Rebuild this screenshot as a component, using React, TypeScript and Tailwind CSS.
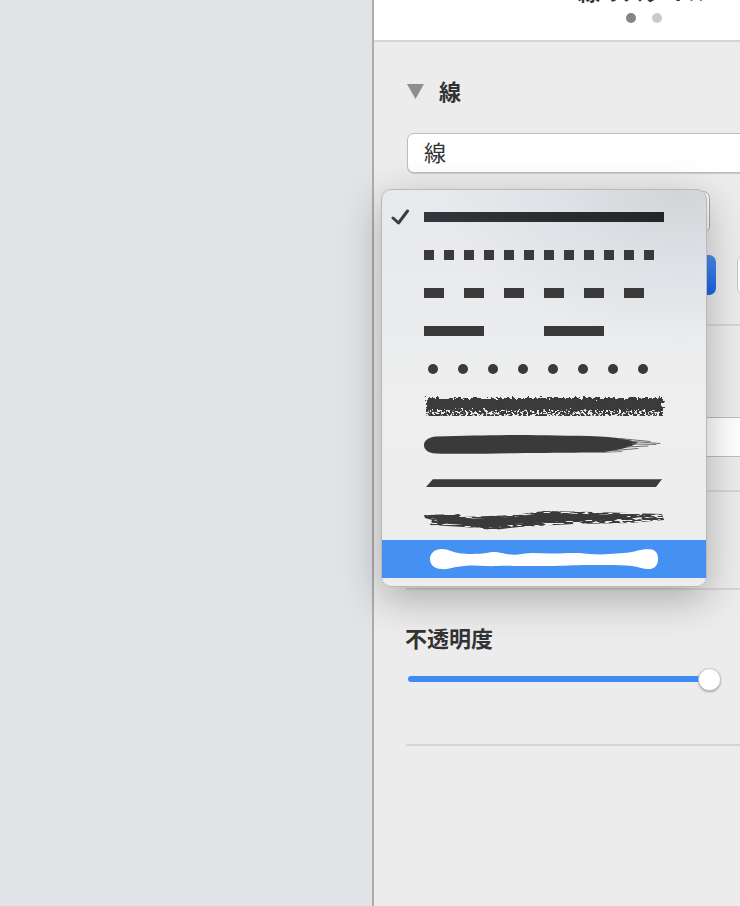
import type { ReactNode } from 'react';

const INK = '#3a3a3a';

function Line({ children }: { children: ReactNode }) {
  return (
    <svg width="250" height="38" viewBox="0 0 250 38" className="overflow-visible">
      {children}
    </svg>
  );
}

function Dashes({ width, step, count }: { width: number; step: number; count: number }) {
  return (
    <Line>
      {Array.from({ length: count }).map((_, i) => (
        <rect key={i} x={i * step} y="14" width={width} height="10" fill={INK} />
      ))}
    </Line>
  );
}

const strokes: ReactNode[] = [
  <Line key="solid">
    <defs>
      <linearGradient id="solid-ink" x1="0" x2="1" y1="0" y2="0">
        <stop offset="0" stopColor="#33363a" />
        <stop offset="1" stopColor="#232528" />
      </linearGradient>
    </defs>
    <rect x="0" y="14" width="240" height="10" fill="url(#solid-ink)" />
  </Line>,
  <Dashes key="dash-s" width={10} step={20} count={12} />,
  <Dashes key="dash-m" width={20} step={40} count={6} />,
  <Dashes key="dash-l" width={60} step={120} count={2} />,
  <Line key="dots">
    {Array.from({ length: 8 }).map((_, i) => (
      <circle key={i} cx={9 + i * 30} cy="19" r="5" fill={INK} />
    ))}
  </Line>,
  <Line key="crayon">
    <g filter="url(#rough)">
      <rect x="3" y="10" width="236" height="12" fill={INK} />
    </g>
    <g filter="url(#speckle)">
      <rect x="2" y="19" width="237" height="9" fill={INK} />
    </g>
  </Line>,
  <Line key="brush">
    <path
      d="M12 10.5 C40 9.5 60 9.5 85 9 C110 9 135 9.5 165 10 C180 10.5 190 11.5 198 12.5 C204 14 210 15 214 16.5 C212 18 210 19 206 20.5 C200 22.5 192 24.5 178 26.5 C150 26.5 130 27 100 27 C60 28 30 28 12 27.5 C3 27 0 23 0 19 C0 14.5 5 11 12 10.5 Z"
      fill={INK}
    />
    <g fill="none" stroke="#6e6e6e" strokeWidth="1" strokeLinecap="round">
      <path d="M195 12.5 L226 15.5" />
      <path d="M208 15.5 L236 17.5" />
      <path d="M208 18 L232 18.5" />
      <path d="M203 21 L224 20" />
      <path d="M190 24.5 L214 22.5" />
      <path d="M178 26.5 L198 25.5" stroke="#8a8a8a" />
    </g>
  </Line>,
  <Line key="chisel">
    <polygon points="9,15 238,15 232,23 2,23" fill={INK} />
    <rect x="9" y="15" width="229" height="1" fill="#666666" />
  </Line>,
  <Line key="dry">
    <g filter="url(#streak)">
      <path
        d="M0 13 L35 12 L38 15 L90 13 L120 9 L170 10 L238 12 L240 18 L205 21 L150 22 L95 25 L70 28 L40 25 L6 23 L8 18 L1 16 Z"
        fill={INK}
      />
    </g>
    <path
      d="M3 13 L34 13 L38 17 L88 15 L118 11 L160 12 L205 13 L200 17 L160 18 L130 20 L92 22 L70 26 L40 23 L14 21 L12 17 Z"
      fill={INK}
    />
  </Line>,
  <Line key="marker">
    <path
      d="M18 9 C24 9 28 12 34 13 C45 14.5 55 14 62 13 C68 11.5 72 11.5 78 13 C85 15 92 15 98 14 C105 12.5 115 13 125 13.5 C135 14 145 12.5 155 13 C165 14 175 15 185 14 C195 13.5 205 13 212 11 C218 9 224 9 228 9.5 C232 10.5 234 14 234 19 C234 25 231 28.5 226 29 C220 29.5 214 27 208 26 C195 24.5 180 25 165 25 C150 25 140 26 125 26 C112 26 100 26 90 26 C75 25.5 70 26.5 62 26 C50 25 40 25.5 32 27 C26 28.5 22 29.5 17 29 C10 28.5 6 24.5 6 19 C6 13 11 9 18 9 Z"
      fill="#ffffff"
    />
  </Line>,
];

function Divider() {
  return <div className="-ml-px h-[2px] bg-[#d6d6d6]" />;
}

function StrokeMenu() {
  return (
    <div className="absolute left-[381px] top-[189px] h-[398px] w-[326px] rounded-[10px] border border-[#b9b9b9] bg-[radial-gradient(ellipse_240px_150px_at_92%_0%,#d2d4d8_0%,#dee1e5_50%,rgba(232,234,237,0)_100%),linear-gradient(#e7e9ed_0%,#e9ebee_30%,#eeeeee_50%,#ededed_100%)] py-[8px] shadow-[0_12px_40px_rgba(0,0,0,0.28)]">
      {strokes.map((stroke, i) => (
        <div key={i} className={`relative flex h-[38px] items-center pl-[42px] ${i === 9 ? 'bg-[#4491f3]' : ''}`}>
          {i === 0 && (
            <svg width="20" height="18" viewBox="0 0 20 18" className="absolute left-[9px] top-[10px]">
              <path d="M2 10 L7.5 15 L16.5 3" fill="none" stroke="#3a3d40" strokeWidth="3" strokeLinecap="round" strokeLinejoin="round" />
            </svg>
          )}
          {stroke}
        </div>
      ))}
    </div>
  );
}

export default function App() {
  return (
    <div className="relative flex h-[906px] w-[740px] overflow-hidden bg-[#e1e3e7] font-['Noto_Sans_CJK_JP','Liberation_Sans',sans-serif] text-[#333333]">
      <svg width="0" height="0" className="absolute">
        <defs>
          <filter id="rough" x="-5%" y="-50%" width="110%" height="200%">
            <feTurbulence type="fractalNoise" baseFrequency="0.32" numOctaves="2" seed="3" />
            <feDisplacementMap in="SourceGraphic" scale="8" />
          </filter>
          <filter id="speckle" x="-5%" y="-50%" width="110%" height="200%">
            <feTurbulence type="fractalNoise" baseFrequency="0.45" numOctaves="2" seed="8" />
            <feColorMatrix values="0 0 0 0 0  0 0 0 0 0  0 0 0 0 0  0 0 0 -14 8" result="holes" />
            <feComposite in="SourceGraphic" in2="holes" operator="in" />
          </filter>
          <filter id="streak" x="-5%" y="-50%" width="110%" height="200%">
            <feTurbulence type="fractalNoise" baseFrequency="0.1 0.8" numOctaves="2" seed="5" />
            <feColorMatrix values="0 0 0 0 0  0 0 0 0 0  0 0 0 0 0  0 0 0 -12 7.4" result="holes" />
            <feComposite in="SourceGraphic" in2="holes" operator="in" />
          </filter>
        </defs>
      </svg>

      <div className="h-full w-[372px] shrink-0" />

      <div className="h-full w-[542px] shrink-0 border-l-2 border-[#adadad] bg-[#ececec]">
        <header className="flex h-[42px] flex-col items-center overflow-hidden border-b-2 border-[#d6d6d6] bg-white">
          <h1 className="-mt-[26px] h-[33px] text-[22px] leading-[33px] font-bold">線のスタイル</h1>
          <div className="mt-[6px] flex gap-[16px]">
            <span className="h-[10px] w-[10px] rounded-full bg-[#858585]" />
            <span className="h-[10px] w-[10px] rounded-full bg-[#cbcbcb]" />
          </div>
        </header>

        <div className="px-[33px]">
          <div className="mt-[35px] flex h-[30px] items-center gap-[15px]">
            <svg width="17" height="15" viewBox="0 0 17 15" className="mb-[1px]">
              <polygon points="0,0 17,0 8.5,15" fill="#8e8e8e" />
            </svg>
            <span className="mb-[5px] text-[22px] leading-[30px] font-bold">線</span>
          </div>

          <div className="mt-[26px] flex h-[40px] items-center rounded-[7px] border border-[#bdbdbd] bg-white pb-[4px] pl-[16px] text-[22px] shadow-[0_1px_1px_rgba(0,0,0,0.15)]">
            線
          </div>

          <div className="mt-[18px] h-[42px] w-[303px] rounded-[7px] border border-[#a8a8a8] bg-white" />

          <div className="mt-[22px] flex h-[40px] gap-[21px]">
            <div className="w-[309px] rounded-[7px] bg-[linear-gradient(#4a8df2,#1a66ea)]" />
            <div className="w-[100px] rounded-[7px] border border-[#c4c4c4] bg-white" />
          </div>

          <div className="mt-[29px]">
            <Divider />
          </div>

          <div className="mt-[91px] h-[40px] rounded-[7px] border border-[#bdbdbd] bg-white" />

          <div className="mt-[33px]">
            <Divider />
          </div>

          <div className="mt-[96px]">
            <Divider />
          </div>

          <h2 className="mt-[32px] -ml-[2px] h-[30px] text-[22px] leading-[30px] font-bold">不透明度</h2>

          <div className="relative mt-[16px] flex h-[22px] w-[314px] items-center pl-px">
            <div className="h-[6px] w-[295px] rounded-full bg-[#3f8bf6]" />
            <div className="absolute left-[291px] top-0 h-[23px] w-[23px] rounded-full border border-[#c8c8c8] bg-white shadow-[0_1px_2px_rgba(0,0,0,0.3)]" />
          </div>

          <div className="mt-[54px]">
            <Divider />
          </div>
        </div>
      </div>

      <StrokeMenu />
    </div>
  );
}
